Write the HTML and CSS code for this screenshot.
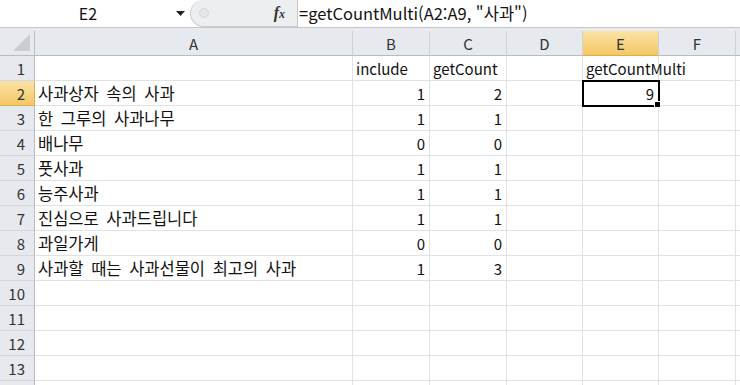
FILE: index.html
```html
<!DOCTYPE html>
<html lang="ko">
<head>
    <meta charset="UTF-8">
    <title>getCountMulti</title>
    <link rel="stylesheet" href="styles.css">
</head>
<body>

    <div class="formula-bar">
        <div class="name-box">E2</div>
        <div class="name-drop">
            <svg width="9" height="5" viewBox="0 0 9 5"><path d="M0 0h9L4.5 5z" fill="#222"/></svg>
        </div>
        <div class="fx-area">
            <span class="fx-dot"></span>
            <span class="fx"><i>f</i><i class="fx-x">x</i></span>
        </div>
        <div class="formula">=getCountMulti(A2:A9, "<span class="ko">사과</span>")</div>
    </div>

    <div class="band"></div>

    <div class="sheet">
        <div class="hd corner">
            <svg width="20" height="20" viewBox="0 0 20 20"><path d="M19 2V19H2z" fill="#c9ccd1"/></svg>
        </div>
        <div class="hd col">A</div>
        <div class="hd col">B</div>
        <div class="hd col">C</div>
        <div class="hd col">D</div>
        <div class="hd col active">E</div>
        <div class="hd col">F</div>
        <div class="hd col last"></div>

        <div class="hd row">1</div>
        <div class="cell"></div>
        <div class="cell">include</div>
        <div class="cell">getCount</div>
        <div class="cell"></div>
        <div class="cell">getCountMulti</div>
        <div class="cell"></div>
        <div class="cell"></div>

        <div class="hd row active">2</div>
        <div class="cell ko">사과상자 속의 사과</div>
        <div class="cell num">1</div>
        <div class="cell num">2</div>
        <div class="cell"></div>
        <div class="cell num selected">9</div>
        <div class="cell"></div>
        <div class="cell"></div>

        <div class="hd row">3</div>
        <div class="cell ko">한 그루의 사과나무</div>
        <div class="cell num">1</div>
        <div class="cell num">1</div>
        <div class="cell"></div>
        <div class="cell"></div>
        <div class="cell"></div>
        <div class="cell"></div>

        <div class="hd row">4</div>
        <div class="cell ko">배나무</div>
        <div class="cell num">0</div>
        <div class="cell num">0</div>
        <div class="cell"></div>
        <div class="cell"></div>
        <div class="cell"></div>
        <div class="cell"></div>

        <div class="hd row">5</div>
        <div class="cell ko">풋사과</div>
        <div class="cell num">1</div>
        <div class="cell num">1</div>
        <div class="cell"></div>
        <div class="cell"></div>
        <div class="cell"></div>
        <div class="cell"></div>

        <div class="hd row">6</div>
        <div class="cell ko">능주사과</div>
        <div class="cell num">1</div>
        <div class="cell num">1</div>
        <div class="cell"></div>
        <div class="cell"></div>
        <div class="cell"></div>
        <div class="cell"></div>

        <div class="hd row">7</div>
        <div class="cell ko">진심으로 사과드립니다</div>
        <div class="cell num">1</div>
        <div class="cell num">1</div>
        <div class="cell"></div>
        <div class="cell"></div>
        <div class="cell"></div>
        <div class="cell"></div>

        <div class="hd row">8</div>
        <div class="cell ko">과일가게</div>
        <div class="cell num">0</div>
        <div class="cell num">0</div>
        <div class="cell"></div>
        <div class="cell"></div>
        <div class="cell"></div>
        <div class="cell"></div>

        <div class="hd row">9</div>
        <div class="cell ko">사과할 때는 사과선물이 최고의 사과</div>
        <div class="cell num">1</div>
        <div class="cell num">3</div>
        <div class="cell"></div>
        <div class="cell"></div>
        <div class="cell"></div>
        <div class="cell"></div>

        <div class="hd row">10</div>
        <div class="cell"></div><div class="cell"></div><div class="cell"></div>
        <div class="cell"></div><div class="cell"></div><div class="cell"></div><div class="cell"></div>

        <div class="hd row">11</div>
        <div class="cell"></div><div class="cell"></div><div class="cell"></div>
        <div class="cell"></div><div class="cell"></div><div class="cell"></div><div class="cell"></div>

        <div class="hd row">12</div>
        <div class="cell"></div><div class="cell"></div><div class="cell"></div>
        <div class="cell"></div><div class="cell"></div><div class="cell"></div><div class="cell"></div>

        <div class="hd row">13</div>
        <div class="cell"></div><div class="cell"></div><div class="cell"></div>
        <div class="cell"></div><div class="cell"></div><div class="cell"></div><div class="cell"></div>

        <div class="hd row">14</div>
        <div class="cell"></div><div class="cell"></div><div class="cell"></div>
        <div class="cell"></div><div class="cell"></div><div class="cell"></div><div class="cell"></div>
    </div>

</body>
</html>
```

FILE: styles.css
```css
/* Base */
body {
    margin: 0;
    width: 740px;
    height: 385px;
    overflow: hidden;
    background: #ffffff;
    font-family: "Noto Sans CJK KR", "Noto Sans", sans-serif;
    color: #111;
}

/* Formula bar */
.formula-bar {
    display: flex;
    height: 28px;
    border-bottom: 1px solid #c3c6cb;
    box-sizing: border-box;
    background: #ffffff;
}
.name-box {
    width: 168px;
    padding-left: 4px;
    text-align: center;
    font-size: 16px;
    line-height: 27px;
}
.name-drop {
    width: 16px;
    display: flex;
    align-items: center;
    justify-content: center;
}
.fx-area {
    width: 107px;
    display: flex;
    align-items: center;
    justify-content: space-between;
    padding: 0 12px 0 8px;
    box-sizing: border-box;
    background: #eceef0;
    border: 1px solid #c9ccd0;
    border-right: none;
    border-top: none;
    border-radius: 14px 0 0 14px;
    margin-left: 2px;
}
.fx-dot {
    width: 8px;
    height: 8px;
    border-radius: 50%;
    border: 1px solid #d3d5d8;
    background: #e4e6e8;
}
.fx {
    font-family: "Liberation Serif", serif;
    font-size: 16px;
    font-weight: bold;
    color: #333;
}
.fx-x {
    font-size: 12px;
}
.formula {
    flex: 1;
    border-left: 1px solid #c3c6cb;
    padding-left: 1px;
    font-size: 16.5px;
    line-height: 27px;
}
.band {
    height: 3px;
    background: #e8eaed;
}

/* Sheet grid */
.sheet {
    display: grid;
    grid-template-columns: 35px 318px 77px 77px 76px 76px 77px 1fr;
    grid-auto-rows: 25px;
}
.hd {
    box-sizing: border-box;
    background: #e6e9ed;
    color: #333;
    font-size: 15px;
    display: flex;
    align-items: center;
    justify-content: center;
}
.col {
    border-right: 1px solid #cdd0d5;
    border-bottom: 1px solid #b9bdc3;
}
.col.last {
    border-right: none;
}
.corner {
    border-right: 1px solid #b9bdc3;
    border-bottom: 1px solid #b9bdc3;
    align-items: flex-end;
    justify-content: flex-end;
    padding: 0 3px 3px 0;
}
.row {
    border-right: 1px solid #b9bdc3;
    border-bottom: 1px solid #d3d6da;
    justify-content: flex-end;
    padding-right: 9px;
}
.hd.active {
    background: linear-gradient(#fbe3a6, #f4c865);
    border-bottom-color: #e0ad4a;
}
.row.active {
    border-right-color: #e0ad4a;
}
.cell {
    box-sizing: border-box;
    border-right: 1px solid #e1e2e3;
    border-bottom: 1px solid #e1e2e3;
    padding: 0 3px;
    font-size: 15px;
    line-height: 26px;
    white-space: nowrap;
    overflow: visible;
}
.ko {
    font-size: 16.5px;
}
.cell.ko {
    word-spacing: 3px;
    line-height: 25px;
}
.num {
    text-align: right;
    padding-right: 4px;
}
.selected {
    position: relative;
    outline: 2px solid #000;
    outline-offset: -1px;
}
.selected::after {
    content: "";
    position: absolute;
    right: -3px;
    bottom: -3px;
    width: 5px;
    height: 5px;
    background: #000;
    border: 1px solid #fff;
}
```
